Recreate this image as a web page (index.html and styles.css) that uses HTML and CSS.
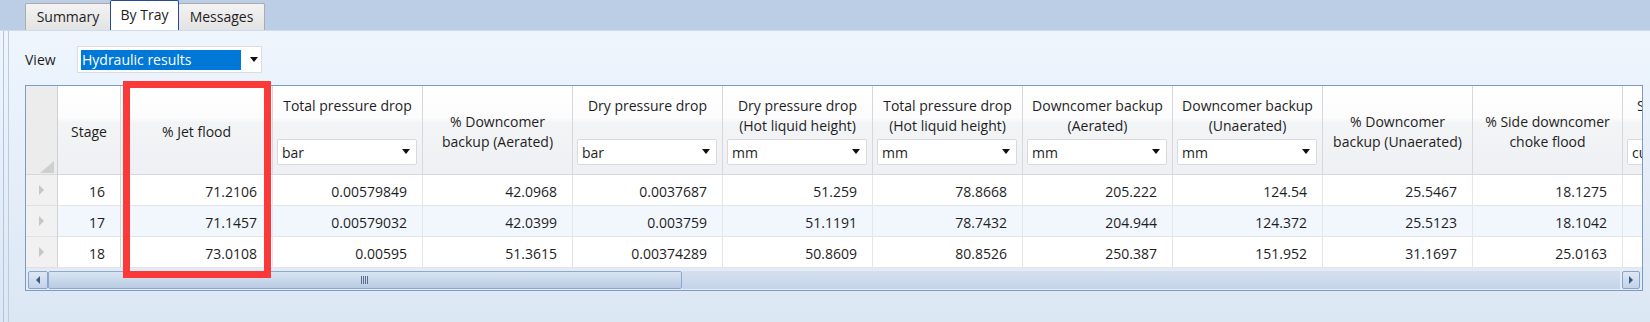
FILE: index.html
```html
<!DOCTYPE html>
<html>
<head>
<meta charset="utf-8">
<title>By Tray</title>
<link rel="stylesheet" href="styles.css">
</head>
<body>
<div class="window">
  <div class="tabstrip">
    <div class="tab tab-summary">Summary</div>
    <div class="tab tab-active">By Tray</div>
    <div class="tab tab-messages">Messages</div>
  </div>
  <div class="frame">
    <div class="edge">
      <div class="pane">
        <div class="viewrow">
          <span class="viewlabel">View</span>
          <div class="vcombo"><span class="sel">Hydraulic results</span><span class="arrow"></span></div>
        </div>
        <div class="gridwrap">
          <div class="viewport">
            <div class="table">
              <!-- header -->
              <div class="h corner"><svg width="14" height="12" viewBox="0 0 14 12"><polygon points="14,0 14,12 0,12" fill="#cfcfcf"/></svg></div>
              <div class="h plain">Stage</div>
              <div class="h plain">% Jet flood</div>
              <div class="h unit"><div class="title">Total pressure drop</div><div class="combo"><span>bar</span><span class="arrow"></span></div></div>
              <div class="h plain">% Downcomer<br>backup (Aerated)</div>
              <div class="h unit"><div class="title">Dry pressure drop</div><div class="combo"><span>bar</span><span class="arrow"></span></div></div>
              <div class="h unit"><div class="title">Dry pressure drop<br>(Hot liquid height)</div><div class="combo"><span>mm</span><span class="arrow"></span></div></div>
              <div class="h unit"><div class="title">Total pressure drop<br>(Hot liquid height)</div><div class="combo"><span>mm</span><span class="arrow"></span></div></div>
              <div class="h unit"><div class="title">Downcomer backup<br>(Aerated)</div><div class="combo"><span>mm</span><span class="arrow"></span></div></div>
              <div class="h unit"><div class="title">Downcomer backup<br>(Unaerated)</div><div class="combo"><span>mm</span><span class="arrow"></span></div></div>
              <div class="h plain">% Downcomer<br>backup (Unaerated)</div>
              <div class="h plain">% Side downcomer<br>choke flood</div>
              <div class="h unit"><div class="title">Side weir load rate</div><div class="combo"><span>cum/h/m</span><span class="arrow"></span></div></div>

              <!-- row 16 -->
              <div class="rh"><span class="tri"></span></div>
              <div class="c">16</div>
              <div class="c">71.2106</div>
              <div class="c">0.00579849</div>
              <div class="c">42.0968</div>
              <div class="c">0.0037687</div>
              <div class="c">51.259</div>
              <div class="c">78.8668</div>
              <div class="c">205.222</div>
              <div class="c">124.54</div>
              <div class="c">25.5467</div>
              <div class="c">18.1275</div>
              <div class="c"></div>

              <!-- row 17 -->
              <div class="rh"><span class="tri"></span></div>
              <div class="c alt">17</div>
              <div class="c alt">71.1457</div>
              <div class="c alt">0.00579032</div>
              <div class="c alt">42.0399</div>
              <div class="c alt">0.003759</div>
              <div class="c alt">51.1191</div>
              <div class="c alt">78.7432</div>
              <div class="c alt">204.944</div>
              <div class="c alt">124.372</div>
              <div class="c alt">25.5123</div>
              <div class="c alt">18.1042</div>
              <div class="c alt"></div>

              <!-- row 18 -->
              <div class="rh"><span class="tri"></span></div>
              <div class="c">18</div>
              <div class="c">73.0108</div>
              <div class="c">0.00595</div>
              <div class="c">51.3615</div>
              <div class="c">0.00374289</div>
              <div class="c">50.8609</div>
              <div class="c">80.8526</div>
              <div class="c">250.387</div>
              <div class="c">151.952</div>
              <div class="c">31.1697</div>
              <div class="c">25.0163</div>
              <div class="c"></div>
            </div>
          </div>
          <div class="hscroll">
            <div class="sbtn"><span class="larrow"></span></div>
            <div class="thumb"><span class="grip"></span></div>
            <div class="track"></div>
            <div class="sbtn"><span class="rarrow"></span></div>
          </div>
          <div class="highlight"></div>
        </div>
      </div>
    </div>
  </div>
</div>
</body>
</html>
```

FILE: styles.css
```css
* { box-sizing: border-box; }
html, body { margin: 0; padding: 0; }
body {
  width: 1650px;
  height: 322px;
  overflow: hidden;
  font-family: "Open Sans", "Noto Sans", sans-serif;
  font-size: 14px;
  color: #1e1e1e;
  background: #bccee5;
}
.window { display: flex; flex-direction: column; height: 322px; }

/* tabs */
.tabstrip {
  height: 30px;
  flex: none;
  display: flex;
  align-items: flex-end;
  padding-left: 25px;
  background: #bccee5;
}
.tab {
  height: 27px;
  display: flex;
  align-items: center;
  justify-content: center;
  border: 1px solid #acacac;
  border-bottom: none;
  border-radius: 2px 2px 0 0;
  background: linear-gradient(#f3f3f3, #e3e3e3);
  padding-bottom: 1px;
}
.tab-summary { width: 86px; margin-right: -1px; }
.tab-active {
  width: 69px;
  height: 30px;
  background: #ffffff;
  border-color: #25489a;
  position: relative;
  z-index: 1;
  padding-bottom: 2px;
}
.tab-messages { width: 87px; margin-left: -1px; }

/* frame */
.frame {
  flex: 1;
  display: flex;
  padding-left: 3px;
  border-top: 1px solid #cfdcee;
  background: linear-gradient(#eef5fd, #dce7f4);
}
.edge {
  flex: 1;
  display: flex;
  border-left: 1px solid #b3c5dd;
  padding-left: 4px;
}
.pane {
  flex: 1;
  border-left: 1px solid #bccbe0;
  padding: 15px 7px 0 16px;
}

/* view row */
.viewrow { display: flex; align-items: center; height: 27px; }
.viewlabel { width: 52px; }
.vcombo {
  width: 185px;
  height: 27px;
  border: 1px solid #dcdcdc;
  background: #ffffff;
  padding: 3px;
  display: flex;
  align-items: center;
}
.sel {
  width: 160px;
  height: 20px;
  line-height: 20px;
  background: #0078d7;
  color: #ffffff;
  padding-left: 1px;
}
.vcombo .arrow { margin-left: 9px; }
.arrow {
  width: 0;
  height: 0;
  border-left: 4px solid transparent;
  border-right: 4px solid transparent;
  border-top: 5px solid #111;
}

/* grid */
.gridwrap {
  margin-top: 12px;
  height: 206px;
  border: 1px solid #7e9bc3;
  position: relative;
  background: linear-gradient(#eaf1fa, #e2eaf5);
}
.viewport {
  width: 1616px;
  height: 182px;
  overflow: hidden;
}
.table {
  display: grid;
  grid-template-columns: 32px 63px 152px repeat(10, 150px);
  grid-template-rows: 89px repeat(3, 31px);
  width: max-content;
}
.h {
  border-right: 1px solid #d6d8db;
  border-bottom: 1px solid #d6d8db;
  background: linear-gradient(#ffffff 0%, #fcfcfd 36%, #f3f4f6 42%, #eff0f3 100%);
  text-align: center;
  line-height: 20px;
}
.corner {
  background: #ececec;
  border-right: 1px solid #d0d0d0;
  display: flex;
  align-items: flex-end;
  justify-content: flex-end;
  padding: 0 3px 1px 0;
}
.plain {
  display: flex;
  align-items: center;
  justify-content: center;
  padding-top: 3px;
}
.unit {
  display: flex;
  flex-direction: column;
  justify-content: space-between;
  padding-top: 10px;
}
.title { white-space: nowrap; }
.combo {
  height: 26px;
  margin: 0 5px 9px 4px;
  border: 1px solid #dadada;
  border-radius: 2px;
  background: #ffffff;
  display: flex;
  align-items: center;
  justify-content: space-between;
  padding: 2px 6px 0 4px;
  text-align: left;
  white-space: nowrap;
}
.combo .arrow { margin-top: -3px; }
.c {
  border-right: 1px solid #e5e6e8;
  border-bottom: 1px solid #e3e4e6;
  display: flex;
  align-items: center;
  justify-content: flex-end;
  padding: 2px 15px 0 0;
  background: #ffffff;
}
.c.alt { background: #f2f7fd; }
.table > .c:nth-child(13n+2) { border-right-color: #d4d4d4; }
.rh {
  background: #f1f1f1;
  border-right: 1px solid #d2d2d2;
  border-bottom: 1px solid #e0e0e0;
  display: flex;
  align-items: center;
  justify-content: center;
}
.tri {
  width: 0;
  height: 0;
  border-top: 5px solid transparent;
  border-bottom: 5px solid transparent;
  border-left: 5px solid #c6c6c6;
}

/* horizontal scrollbar */
.hscroll {
  display: flex;
  width: 1612px;
  height: 18px;
  margin: 3px 0 0 2px;
}
.sbtn {
  width: 20px;
  flex: none;
  border: 1px solid #8aa3c6;
  border-radius: 2px;
  background: linear-gradient(#dfe8f4, #c3d3ea);
  display: flex;
  align-items: center;
  justify-content: center;
}
.sbtn:last-child { width: 18px; margin-left: 2px; }
.larrow {
  width: 0; height: 0;
  border-top: 4px solid transparent;
  border-bottom: 4px solid transparent;
  border-right: 4px solid #3b5a85;
}
.rarrow {
  width: 0; height: 0;
  border-top: 4px solid transparent;
  border-bottom: 4px solid transparent;
  border-left: 4px solid #3b5a85;
}
.thumb {
  width: 634px;
  flex: none;
  border: 1px solid #8fa8ca;
  border-radius: 2px;
  background: linear-gradient(#d9e5f3, #b9cbe3);
  display: flex;
  align-items: center;
  justify-content: center;
}
.grip {
  width: 8px;
  height: 8px;
  background: repeating-linear-gradient(90deg, #5a6f8c 0 1px, transparent 1px 2px);
}
.track {
  flex: 1;
  background: linear-gradient(#d4e0ef, #c4d4e9);
}

/* red emphasis box */
.highlight {
  position: absolute;
  left: 97px;
  top: -5px;
  width: 148px;
  height: 197px;
  border: 7px solid #fb3939;
}
```
